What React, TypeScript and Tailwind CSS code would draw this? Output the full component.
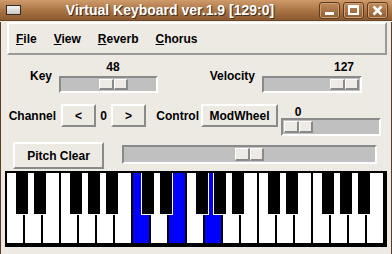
import React from "react";

const FONT = { fontFamily: '"Liberation Sans", Arial, Helvetica, sans-serif' };

// pressed white keys (index from left) -> C, E, G of second octave
const PRESSED = [7, 9, 11];
const BLACK_AFTER = [0, 1, 3, 4, 5];

function Keyboard() {
  const whites = Array.from({ length: 21 }, (_, i) => i);
  const blacks = Array.from({ length: 20 }, (_, i) => i).filter((i) => BLACK_AFTER.includes(i % 7));
  return (
    <svg width={382} height={76} viewBox="5 172 382 76" className="block">
      <rect x={5} y={172} width={382} height={76} fill="#000" />
      {whites.map((i) => (
        <rect
          key={i}
          x={7 + 18 * i}
          y={174}
          width={16}
          height={70}
          fill={PRESSED.includes(i) ? "#0000ff" : "#fff"}
        />
      ))}
      {blacks.map((i) => (
        <g key={i}>
          <rect x={15 + 18 * i} y={174} width={14} height={42} fill="#fff" />
          <rect x={16 + 18 * i} y={174} width={12} height={41} fill="#000" />
        </g>
      ))}
    </svg>
  );
}

function Slider({
  width,
  height,
  offset,
  value,
  labelH = 0,
}: {
  width: number;
  height: number;
  offset: number;
  value?: string;
  labelH?: number;
}) {
  return (
    <div className="flex flex-col" style={{ width }}>
      {labelH > 0 && (
        <div className="relative text-[12px] leading-none" style={{ height: labelH }}>
          <span className="absolute top-[2px] -translate-x-1/2" style={{ left: offset + 2 + 14 }}>
            {value}
          </span>
        </div>
      )}
      <div
        className="flex border-2 border-t-[#8a8a8a] border-l-[#8a8a8a] border-b-white border-r-white bg-[#c0c0c0] py-px"
        style={{ height }}
      >
        <div style={{ width: offset }} className="shrink-0" />
        <div className="flex w-[29px] shrink-0">
          <div className="flex-1 border-t border-l border-white border-b-2 border-r-2 border-b-[#8a8a8a] border-r-[#8a8a8a] bg-[#eeebe6]" />
          <div className="flex-1 border-t border-l border-white border-b-2 border-r-2 border-b-[#8a8a8a] border-r-[#8a8a8a] bg-[#eeebe6]" />
        </div>
      </div>
    </div>
  );
}

function Btn({ children, className }: { children: React.ReactNode; className: string }) {
  return (
    <div
      className={
        "flex items-center justify-center border-2 border-t-white border-l-white border-b-[#8a8a8a] border-r-[#8a8a8a] bg-[#edeae4] " +
        className
      }
    >
      {children}
    </div>
  );
}

function TitleButton({ children }: { children: React.ReactNode }) {
  return (
    <div className="flex h-[17px] w-[21px] items-center justify-center rounded-[3px] border border-[#5e3b20] bg-gradient-to-b from-[#c08c5c] to-[#8e5c34] shadow-[inset_0_0_0_1px_#cf9f72]">
      {children}
    </div>
  );
}

function Mn({ u, rest }: { u: string; rest: string }) {
  return (
    <span>
      <span className="underline underline-offset-[1px]">{u}</span>
      {rest}
    </span>
  );
}

export default function App() {
  return (
    <div className="h-[254px] w-[392px] overflow-hidden bg-[#edeae4] font-bold text-black" style={FONT}>
      {/* title bar */}
      <div className="flex h-[21px] items-center bg-gradient-to-b from-[#cf9b6b] via-[#ac7645] to-[#8c5a31] border-b border-[#6b4528]">
        <div className="ml-[6px] h-[10px] w-[15px] border border-[#3a2a1e] bg-gradient-to-b from-[#f4f4f4] to-[#c8c8c8]" />
        <div className="flex-1 text-center text-[14px] leading-none text-white [text-shadow:1px_1px_0_#4a2e18]">
          Virtual Keyboard ver.1.9 [129:0]
        </div>
        <div className="mr-[4px] flex gap-[3px]">
          <TitleButton>
            <div className="mt-[7px] h-[3px] w-[9px] bg-white" />
          </TitleButton>
          <TitleButton>
            <div className="h-[10px] w-[11px] border-2 border-t-[3px] border-white" />
          </TitleButton>
          <TitleButton>
            <svg width="11" height="11" viewBox="0 0 11 11">
              <path d="M1.5 1.5 L9.5 9.5 M9.5 1.5 L1.5 9.5" stroke="#fff" strokeWidth="2.6" />
            </svg>
          </TitleButton>
        </div>
      </div>

      <div className="h-[233px] border-x border-b border-[#5c3d24]">
        {/* menu bar */}
        <div className="ml-[6px] mt-px flex h-[33px] w-[380px] items-center gap-[17px] border-2 border-t-white border-l-white border-b-[#9a9a9a] border-r-[#9a9a9a] pl-[7px] text-[12px]">
          <Mn u="F" rest="ile" />
          <Mn u="V" rest="iew" />
          <Mn u="R" rest="everb" />
          <Mn u="C" rest="horus" />
        </div>

        {/* key / velocity */}
        <div className="mt-[4px] flex h-[34px] items-center text-[12px]">
          <div className="w-[51px] text-right">Key</div>
          <div className="ml-[7px]">
            <Slider width={99} height={17} offset={38} value="48" labelH={17} />
          </div>
          <div className="w-[97px] text-right">Velocity</div>
          <div className="ml-[7px]">
            <Slider width={100} height={17} offset={66} value="127" labelH={17} />
          </div>
        </div>

        {/* channel / control */}
        <div className="mt-[11px] flex h-[33px] items-start text-[12px]">
          <div className="flex h-[23px] w-[55px] items-center justify-end">Channel</div>
          <Btn className="ml-[5px] h-[23px] w-[35px]">&lt;</Btn>
          <div className="flex h-[23px] w-[15px] items-center justify-center">0</div>
          <Btn className="h-[23px] w-[35px]">&gt;</Btn>
          <div className="flex h-[23px] w-[53px] items-center justify-end">Control</div>
          <Btn className="ml-[2px] h-[23px] w-[77px]">ModWheel</Btn>
          <div className="ml-[3px]">
            <Slider width={100} height={18} offset={1} value="0" labelH={14} />
          </div>
        </div>

        {/* pitch */}
        <div className="mt-[5px] flex items-start text-[12px]">
          <Btn className="ml-[12px] h-[27px] w-[91px]">Pitch Clear</Btn>
          <div className="ml-[18px] mt-[3px]">
            <Slider width={255} height={19} offset={111} />
          </div>
        </div>

        {/* keyboard */}
        <div className="ml-[4px] mt-[2px]">
          <Keyboard />
        </div>
      </div>
    </div>
  );
}
